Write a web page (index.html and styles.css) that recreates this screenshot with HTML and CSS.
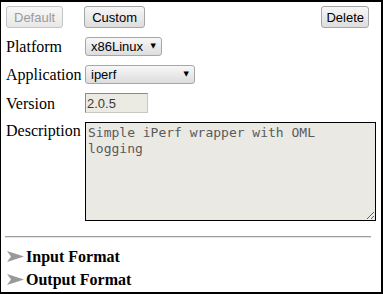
FILE: index.html
```html
<!DOCTYPE html>
<html lang="en">
<head>
    <meta charset="UTF-8">
    <title>Application</title>
    <link rel="stylesheet" href="styles.css">
</head>
<body>
    <div class="painel">
        <div class="barra">
            <button class="botao" disabled>Default</button>
            <button class="botao custom">Custom</button>
            <button class="botao apagar">Delete</button>
        </div>

        <div class="formulario">
            <label class="rotulo">Platform</label>
            <span class="caixa plataforma"><select class="escolha"><option>x86Linux</option></select></span>

            <label class="rotulo">Application</label>
            <span class="caixa aplicacao"><select class="escolha"><option>iperf</option></select></span>

            <label class="rotulo">Version</label>
            <input class="versao" type="text" value="2.0.5" readonly spellcheck="false">

            <label class="rotulo desc">Description</label>
            <textarea class="descricao" readonly spellcheck="false">Simple iPerf wrapper with OML logging</textarea>
        </div>

        <hr class="linha">

        <div class="secao primeira">
            <svg class="seta" width="18" height="11" viewBox="0 0 18 11"><polygon points="0,0 17,5.5 0,11 4,5.5" fill="#999"/></svg>
            Input Format
        </div>
        <div class="secao">
            <svg class="seta" width="18" height="11" viewBox="0 0 18 11"><polygon points="0,0 17,5.5 0,11 4,5.5" fill="#999"/></svg>
            Output Format
        </div>
    </div>
</body>
</html>
```

FILE: styles.css
```css
* {
    margin: 0;
    padding: 0;
    box-sizing: border-box;
}

body {
    background: white;
}

.painel {
    height: 294px;
    border: 2px solid black;
    border-left-width: 1px;
    padding: 4px 12px 0 5px;
    font-family: "Liberation Serif", serif;
    font-size: 16px;
}

.barra {
    display: flex;
    height: 22px;
}

.botao {
    height: 22px;
    padding: 0 7px;
    font-family: "Liberation Sans", Arial, sans-serif;
    font-size: 13px;
    color: black;
    background: linear-gradient(#f7f7f7, #dddddd);
    border: 1px solid #a6a6a6;
    border-radius: 3px;
}

.botao:disabled {
    color: #9a9a9a;
    border-color: #c4c4c4;
    background: linear-gradient(#f8f8f8, #e8e8e8);
}

.custom {
    margin-left: 21px;
}

.apagar {
    margin-left: auto;
    padding: 0 4px;
}

.formulario {
    display: grid;
    grid-template-columns: 79px 1fr;
    grid-template-rows: 19px 19px 20px 99px;
    row-gap: 9px;
    margin-top: 9px;
    align-items: center;
}

.rotulo {
    line-height: 19px;
}

.desc {
    align-self: start;
    margin-top: -1px;
}

.caixa {
    position: relative;
    display: inline-block;
    height: 19px;
}

.plataforma { width: 77px; }
.aplicacao { width: 110px; }

.escolha {
    appearance: none;
    width: 100%;
    height: 19px;
    padding: 0 0 0 5px;
    font-family: "Liberation Sans", Arial, sans-serif;
    font-size: 13px;
    color: black;
    background: linear-gradient(#f7f7f7, #dddddd);
    border: 1px solid #a6a6a6;
    border-radius: 3px;
}

/* a setinha do select fica por cima dele */
.caixa::after {
    content: "\25BC";
    position: absolute;
    right: 6px;
    top: 5px;
    font-family: "DejaVu Sans", sans-serif;
    font-size: 7px;
    color: black;
}

.versao {
    width: 63px;
    height: 20px;
    padding: 0 1px;
    font-family: "Liberation Sans", Arial, sans-serif;
    font-size: 13px;
    color: #3a3a3a;
    background: #ebebe4;
    border: 1px solid #c8c8c2;
    border-top-color: #8a8a85;
    border-left-color: #8a8a85;
    outline: none;
    caret-color: transparent;
}

.descricao {
    width: 291px;
    height: 99px;
    padding: 2px 2px;
    font-family: "DejaVu Sans Mono", monospace;
    font-size: 13px;
    line-height: 16px;
    color: #5a5a5a;
    background: #ebe9e3;
    border: 1px solid black;
    resize: both;
    outline: none;
    caret-color: transparent;
}

.linha {
    margin: 15px -2px 0 -1px;
    border: none;
    border-top: 1px solid #9c9c9c;
    border-bottom: 1px solid #e6e6e6;
}

.secao {
    display: flex;
    align-items: center;
    gap: 1px;
    height: 23px;
    font-weight: bold;
}

.primeira {
    margin-top: 7px;
}

.seta {
    margin-left: 1px;
}
```
